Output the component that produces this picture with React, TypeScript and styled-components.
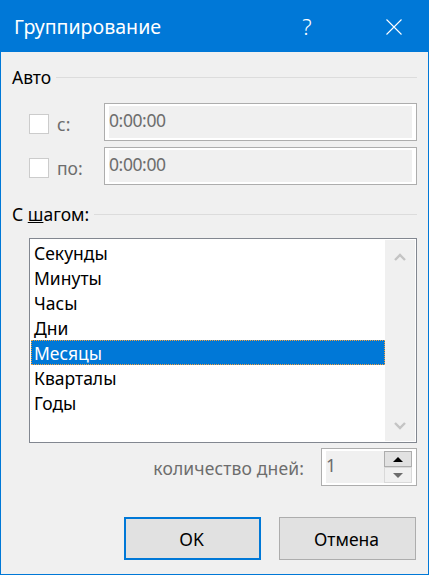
import styled, { createGlobalStyle } from 'styled-components';

const GlobalStyle = createGlobalStyle`
  html, body {
    margin: 0;
    padding: 0;
    background: #f0f0f0;
  }
  * {
    box-sizing: border-box;
  }
`;

const UNITS = ['Секунды', 'Минуты', 'Часы', 'Дни', 'Месяцы', 'Кварталы', 'Годы'];
const SELECTED_UNIT = 'Месяцы';

const Window = styled.div`
  width: 429px;
  height: 575px;
  display: flex;
  flex-direction: column;
  background: #f0f0f0;
  border: 1px solid #0078d7;
  font-family: 'Noto Sans', 'Open Sans', sans-serif;
  font-size: 17.5px;
  color: #000;
`;

const TitleBar = styled.div`
  height: 51px;
  flex-shrink: 0;
  display: flex;
  align-items: center;
  background: #0078d7;
  color: #fff;
  padding-left: 13px;
`;

const Title = styled.div`
  flex: 1;
  font-size: 19.6px;
`;

const HelpGlyph = styled.div`
  width: 60px;
  text-align: center;
  font-size: 22px;
  font-weight: 300;
  margin-right: 34px;
  margin-bottom: 2px;
`;

const CloseButton = styled.div`
  width: 46px;
  margin-right: 11px;
  display: flex;
  justify-content: center;
`;

const Body = styled.div`
  flex: 1;
  display: flex;
  flex-direction: column;
  padding: 13px 11px 0 11px;
`;

const SectionHeader = styled.div`
  display: flex;
  align-items: center;
  gap: 5px;
  height: 24px;
`;

const SectionLine = styled.div`
  flex: 1;
  height: 1px;
  background: #dcdcdc;
`;

const Underlined = styled.span`
  text-decoration: underline;
`;

const AutoFields = styled.div`
  display: flex;
  flex-direction: column;
  gap: 6px;
  padding-top: 14px;
  margin-bottom: 17px;
`;

const FieldRow = styled.div`
  display: grid;
  grid-template-columns: 75px 1fr;
  align-items: stretch;
  height: 38px;
  padding-left: 17px;
`;

const CheckLabel = styled.div`
  display: flex;
  align-items: center;
  gap: 8px;
  color: #6d6d6d;
  padding-top: 4px;
`;

const CheckBox = styled.div`
  width: 20px;
  height: 20px;
  background: #fff;
  border: 1px solid #cccccc;
`;

const TimeField = styled.div`
  border: 1px solid #adadad;
  background: #f0f0f0;
  box-shadow: inset 4px 2px 0 #fff, inset -4px -2px 0 #fff;
  color: #6d6d6d;
  padding: 0 4px;
  line-height: 33px;
  letter-spacing: -0.4px;
`;

const ListRow = styled.div`
  margin: 12px 0 0 17px;
  height: 205px;
  display: flex;
  border: 1px solid #828790;
  padding: 1px;
  background: #fff;
`;

const List = styled.div`
  flex: 1;
  display: flex;
  flex-direction: column;
`;

const ListItem = styled.div<{ $selected: boolean }>`
  height: 25px;
  line-height: 24px;
  padding-left: 2px;
  border: 1px dotted ${({ $selected }) => ($selected ? '#f0a040' : 'transparent')};
  background: ${({ $selected }) => ($selected ? '#0078d7' : 'transparent')};
  color: ${({ $selected }) => ($selected ? '#fff' : '#000')};
`;

const ScrollTrack = styled.div`
  width: 30px;
  background: #f0f0f0;
  display: flex;
  flex-direction: column;
  justify-content: space-between;
  align-items: center;
  padding: 13px 0 11px;
`;

const DaysRow = styled.div`
  display: flex;
  justify-content: flex-end;
  align-items: center;
  gap: 17px;
  height: 38px;
  margin-top: 5px;
`;

const DaysLabel = styled.div`
  color: #6d6d6d;
  padding-top: 2px;
  letter-spacing: 0.13px;
`;

const Spinner = styled.div`
  width: 96px;
  height: 38px;
  display: flex;
  border: 1px solid #adadad;
  box-shadow: inset 4px 2px 0 #fff, inset -4px -2px 0 #fff;
  padding: 2px 2px 2px 4px;
`;

const SpinnerValue = styled.div`
  flex: 1;
  color: #6d6d6d;
  line-height: 28px;
`;

const SpinnerButtons = styled.div`
  width: 28px;
  display: flex;
  flex-direction: column;
  margin-right: 2px;
`;

const SpinnerButton = styled.div<{ $enabled: boolean }>`
  flex: 1;
  display: flex;
  align-items: center;
  justify-content: center;
  background: ${({ $enabled }) => ($enabled ? '#e1e1e1' : '#f0f0f0')};
  border: 1px solid ${({ $enabled }) => ($enabled ? '#adadad' : '#d9d9d9')};
`;

const Footer = styled.div`
  display: flex;
  justify-content: flex-end;
  gap: 18px;
  margin-top: 31px;
  padding-right: 1px;
`;

const DialogButton = styled.div<{ $primary?: boolean }>`
  width: 137px;
  height: 43px;
  display: flex;
  align-items: center;
  justify-content: center;
  padding-right: 2px;
  background: #e1e1e1;
  border: ${({ $primary }) => ($primary ? '2px solid #0078d7' : '1px solid #adadad')};
`;

export default function App() {
  return (
    <Window>
      <GlobalStyle />
      <TitleBar>
        <Title>Группирование</Title>
        <HelpGlyph>?</HelpGlyph>
        <CloseButton>
          <svg width="16" height="16" viewBox="0 0 16 16" fill="none" stroke="#fff" strokeWidth="1.1">
            <path d="M0.5 0.5L15.5 15.5M15.5 0.5L0.5 15.5" />
          </svg>
        </CloseButton>
      </TitleBar>
      <Body>
        <SectionHeader>
          <span>Авто</span>
          <SectionLine />
        </SectionHeader>
        <AutoFields>
          <FieldRow>
            <CheckLabel>
              <CheckBox />
              <span>с:</span>
            </CheckLabel>
            <TimeField>0:00:00</TimeField>
          </FieldRow>
          <FieldRow>
            <CheckLabel>
              <CheckBox />
              <span>по:</span>
            </CheckLabel>
            <TimeField>0:00:00</TimeField>
          </FieldRow>
        </AutoFields>
        <SectionHeader>
          <span>
            С <Underlined>ш</Underlined>агом:
          </span>
          <SectionLine />
        </SectionHeader>
        <ListRow>
          <List>
            {UNITS.map((unit) => (
              <ListItem key={unit} $selected={unit === SELECTED_UNIT}>
                {unit}
              </ListItem>
            ))}
          </List>
          <ScrollTrack>
            <svg width="12" height="8" viewBox="0 0 12 8" fill="none" stroke="#c4c4c4" strokeWidth="2.4">
              <path d="M1 7L6 2L11 7" />
            </svg>
            <svg width="12" height="8" viewBox="0 0 12 8" fill="none" stroke="#c4c4c4" strokeWidth="2.4">
              <path d="M1 1L6 6L11 1" />
            </svg>
          </ScrollTrack>
        </ListRow>
        <DaysRow>
          <DaysLabel>количество дней:</DaysLabel>
          <Spinner>
            <SpinnerValue>1</SpinnerValue>
            <SpinnerButtons>
              <SpinnerButton $enabled>
                <svg width="10" height="5" viewBox="0 0 10 5">
                  <path d="M5 0L10 5H0Z" fill="#000" />
                </svg>
              </SpinnerButton>
              <SpinnerButton $enabled={false}>
                <svg width="10" height="5" viewBox="0 0 10 5">
                  <path d="M0 0H10L5 5Z" fill="#6d6d6d" />
                </svg>
              </SpinnerButton>
            </SpinnerButtons>
          </Spinner>
        </DaysRow>
        <Footer>
          <DialogButton $primary>OK</DialogButton>
          <DialogButton>Отмена</DialogButton>
        </Footer>
      </Body>
    </Window>
  );
}
